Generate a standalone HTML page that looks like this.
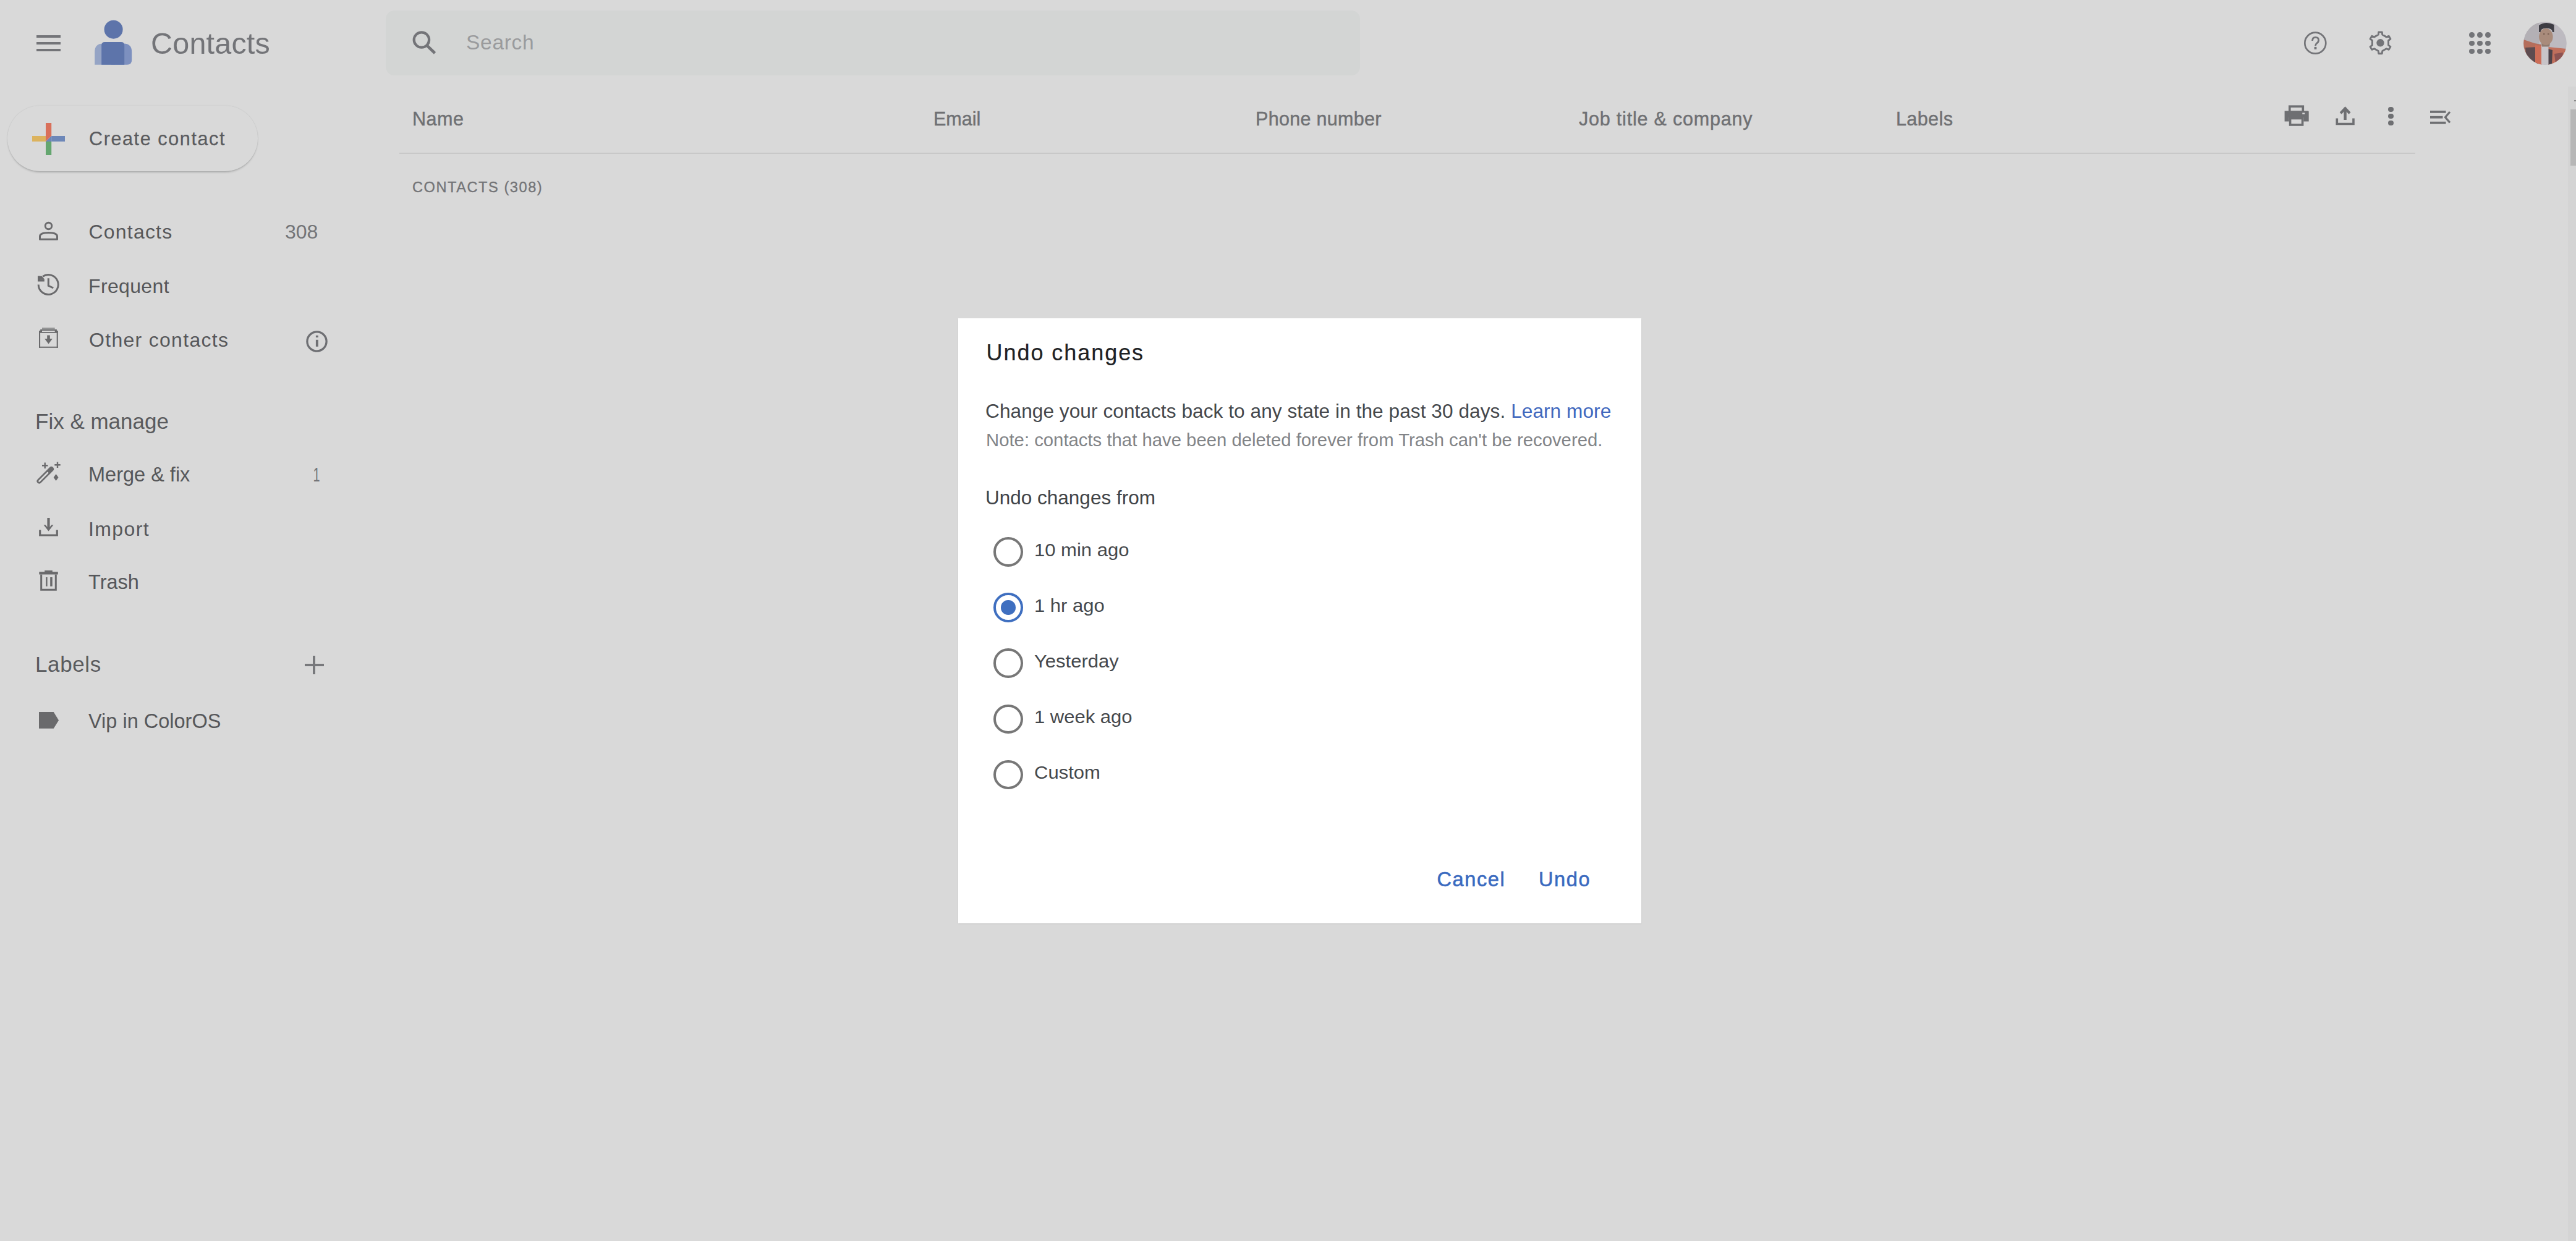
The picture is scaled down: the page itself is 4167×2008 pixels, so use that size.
<!DOCTYPE html>
<html><head><meta charset="utf-8"><title>Contacts</title>
<style>
html,body{margin:0;padding:0;}
body{width:4167px;height:2008px;overflow:hidden;background:#d9d9d9;position:relative;font-family:"Liberation Sans", sans-serif;}
.r{position:absolute;}
.t{position:absolute;white-space:nowrap;}
svg.r{overflow:visible;}
</style></head><body>
<div class="r" style="left:59px;top:57px;width:39px;height:4px;background:#737478"></div>
<div class="r" style="left:59px;top:68px;width:39px;height:4px;background:#737478"></div>
<div class="r" style="left:59px;top:79px;width:39px;height:4px;background:#737478"></div>
<svg class="r" style="left:150px;top:30px" width="66" height="78" viewBox="0 0 66 78">
<circle cx="33.6" cy="17.7" r="15" fill="#5d74aa"/>
<path d="M3.2 74.8 L3.2 54 Q3.2 40.5 16.5 40.5 L36 40.5 L36 74.8Z" fill="#95a4c5"/>
<path d="M30 74.8 L30 40.5 L50 40.5 Q63.2 40.5 63.2 54 L63.2 67 Q63.2 74.8 55.5 74.8Z" fill="#7d90bf"/>
<path d="M14.2 74.8 L14.2 43.5 Q14.2 38.1 19.6 38.1 L45.8 38.1 Q51.2 38.1 51.2 43.5 L51.2 74.8Z" fill="#5d74aa"/>
</svg>
<div class="t" style="left:244.0px;top:45.5px;font-size:48.5px;line-height:48.5px;color:#737478;font-weight:400;letter-spacing:0.2px;">Contacts</div>
<div class="r" style="left:624px;top:17px;width:1576px;height:105px;border-radius:14px;background:#d3d5d4"></div>
<svg class="r" style="left:660px;top:44px" width="52" height="50" viewBox="0 0 52 50">
<circle cx="21.9" cy="20.5" r="12.2" fill="none" stroke="#737478" stroke-width="4.2"/>
<path d="M30.5 29.5 L43.5 42" stroke="#737478" stroke-width="4.6"/>
</svg>
<div class="t" style="left:754.0px;top:52.0px;font-size:33.5px;line-height:33.5px;color:#9a9b9d;font-weight:400;letter-spacing:0.7px;">Search</div>
<svg class="r" style="left:3720px;top:44px" width="52" height="52" viewBox="0 0 52 52">
<circle cx="25.3" cy="25.7" r="17" fill="none" stroke="#737478" stroke-width="2.7"/>
<path d="M20.6 22 Q20.6 16.3 25.6 16.3 Q30.6 16.3 30.6 21 Q30.6 24 27.6 26.2 Q25.5 27.6 25.5 30.5" fill="none" stroke="#737478" stroke-width="2.8"/>
<rect x="23.6" y="32" width="3.8" height="3.8" fill="#737478"/>
</svg>
<svg class="r" style="left:3824px;top:43px" width="54" height="54" viewBox="0 0 54 54">
<path d="M23.74 8.92 L29.26 8.92 L29.75 13.09 L36.31 16.88 L40.17 15.22 L42.93 20.00 L39.56 22.51 L39.56 30.09 L42.93 32.60 L40.17 37.38 L36.31 35.72 L29.75 39.51 L29.26 43.68 L23.74 43.68 L23.25 39.51 L16.69 35.72 L12.83 37.38 L10.07 32.60 L13.44 30.09 L13.44 22.51 L10.07 20.00 L12.83 15.22 L16.69 16.88 L23.25 13.09Z" fill="none" stroke="#737478" stroke-width="2.9" stroke-linejoin="round"/>
<circle cx="26.5" cy="26.3" r="6.2" fill="#737478"/>
</svg>
<div class="r" style="left:3994.2px;top:52.0px;width:8.6px;height:8.6px;border-radius:50%;background:#737478"></div>
<div class="r" style="left:4007.1px;top:52.0px;width:8.6px;height:8.6px;border-radius:50%;background:#737478"></div>
<div class="r" style="left:4020.1px;top:52.0px;width:8.6px;height:8.6px;border-radius:50%;background:#737478"></div>
<div class="r" style="left:3994.2px;top:65.7px;width:8.6px;height:8.6px;border-radius:50%;background:#737478"></div>
<div class="r" style="left:4007.1px;top:65.7px;width:8.6px;height:8.6px;border-radius:50%;background:#737478"></div>
<div class="r" style="left:4020.1px;top:65.7px;width:8.6px;height:8.6px;border-radius:50%;background:#737478"></div>
<div class="r" style="left:3994.2px;top:78.5px;width:8.6px;height:8.6px;border-radius:50%;background:#737478"></div>
<div class="r" style="left:4007.1px;top:78.5px;width:8.6px;height:8.6px;border-radius:50%;background:#737478"></div>
<div class="r" style="left:4020.1px;top:78.5px;width:8.6px;height:8.6px;border-radius:50%;background:#737478"></div>
<svg class="r" style="left:4081.5px;top:35px" width="70" height="70" viewBox="0 0 70 70">
<defs><clipPath id="av"><circle cx="35" cy="35" r="34.8"/></clipPath></defs>
<g clip-path="url(#av)">
<rect width="70" height="70" fill="#bdbac0"/>
<rect x="0" y="0" width="25" height="70" fill="#b3b0b5"/>
<path d="M0 29 L18 35 L29 37 L29 70 L0 70Z" fill="#b46e5c"/>
<path d="M3 42 L23 41 L25 70 L6 70Z" fill="#5e4c50"/>
<path d="M19 38 L29.5 39 L29.5 70 L19 70Z" fill="#cd6d57"/>
<path d="M40 41 L70 44 L70 70 L40 70Z" fill="#c06f5c"/>
<path d="M50 52 L64 50 L62 68 L52 68Z" fill="#8c5352"/>
<path d="M40 44 L47 46 L46 70 L40 70Z" fill="#4d434a"/>
<rect x="29" y="39" width="11.5" height="31" fill="#c8c4c8"/>
<path d="M29 34 L43 34 L42 40.5 L30 40.5Z" fill="#8f7b70"/>
<ellipse cx="36.3" cy="24.5" rx="11.3" ry="13.5" fill="#a98b7b"/>
<path d="M25 17 L25 6 Q36 -1.5 49.5 5 L49.5 17 L47 17 Q47 10.5 37 10.5 Q27.5 10.5 27.5 17Z" fill="#3d3c43"/>
<path d="M32 20 L34.5 20 M39 20 L41.5 20" stroke="#7d6255" stroke-width="2"/>
</g></svg>
<div class="r" style="left:12px;top:171px;width:405px;height:106px;border-radius:53px;background:#d9d9d9;box-shadow:0 3px 3px -1px rgba(60,64,67,0.26),0 0 1.5px rgba(60,64,67,0.2)"></div>
<svg class="r" style="left:52px;top:199px" width="53" height="52" viewBox="0 0 53 52">
<rect x="22" y="0" width="9.2" height="21" fill="#d9705a"/>
<rect x="0" y="21" width="22" height="9" fill="#dcb35e"/>
<rect x="31.2" y="21" width="21.8" height="9" fill="#6d87b8"/>
<rect x="22" y="30" width="9.2" height="22" fill="#64a66f"/>
<path d="M22 21 L31.2 21 L22 30Z" fill="#d9705a"/>
<path d="M31.2 21 L31.2 30 L22 30Z" fill="#6d87b8"/>
</svg>
<div class="t" style="left:144.0px;top:209.1px;font-size:30.5px;line-height:30.5px;color:#5a5b5e;font-weight:400;letter-spacing:1.62px;-webkit-text-stroke:0.25px #5a5b5e;">Create contact</div>
<svg class="r" style="left:56px;top:350px" width="46" height="46" viewBox="0 0 46 46">
<circle cx="22.5" cy="15.5" r="5.3" fill="none" stroke="#6a6a6c" stroke-width="2.9"/>
<path d="M8.5 37.3 L8.5 32.5 Q8.5 26.5 22.5 26.5 Q36.5 26.5 36.5 32.5 L36.5 37.3 Z" fill="none" stroke="#6a6a6c" stroke-width="3" stroke-linejoin="round"/>
</svg>
<div class="t" style="left:143.5px;top:359.0px;font-size:32px;line-height:32px;color:#56575a;font-weight:400;letter-spacing:1.2px;">Contacts</div>
<div class="t" style="left:461.0px;top:359.0px;font-size:32px;line-height:32px;color:#737477;font-weight:400;letter-spacing:0px;">308</div>
<svg class="r" style="left:56px;top:438px" width="46" height="46" viewBox="0 0 46 46">
<path d="M6.20 22.50 A16 16 0 1 0 13.02 9.39" fill="none" stroke="#6a6a6c" stroke-width="3"/>
<path d="M5 8.7 L5 17.6 L15.8 17.6 L15.8 13.6 L9 13.6 L9 8.7Z" fill="#6a6a6c"/>
<path d="M5 8.7 L11.5 8.7 L15.8 13.6 L9 13.6Z" fill="#6a6a6c"/>
<path d="M22.3 12.3 L22.3 24.3 L30.3 28" fill="none" stroke="#6a6a6c" stroke-width="3"/>
</svg>
<div class="t" style="left:143.0px;top:447.0px;font-size:32px;line-height:32px;color:#56575a;font-weight:400;letter-spacing:0.35px;">Frequent</div>
<svg class="r" style="left:56px;top:525px" width="46" height="46" viewBox="0 0 46 46">
<rect x="12" y="5.2" width="20.7" height="2.3" fill="#929394"/>
<rect x="9.2" y="8" width="26.7" height="2" fill="#6a6a6c"/>
<rect x="7" y="10" width="5" height="2" fill="#6a6a6c"/>
<rect x="32.7" y="10" width="5.1" height="2" fill="#6a6a6c"/>
<rect x="7" y="12" width="30.8" height="1.8" fill="#6a6a6c"/>
<rect x="7" y="10" width="2.1" height="27.8" fill="#6a6a6c"/>
<rect x="35.7" y="10" width="2.1" height="27.8" fill="#6a6a6c"/>
<rect x="7" y="35.8" width="30.8" height="2" fill="#6a6a6c"/>
<rect x="20.2" y="17.5" width="4.6" height="7.5" fill="#6a6a6c"/>
<path d="M16.1 23 L28.9 23 L22.5 31.6Z" fill="#6a6a6c"/>
</svg>
<div class="t" style="left:144.0px;top:533.7px;font-size:32px;line-height:32px;color:#56575a;font-weight:400;letter-spacing:1.3px;">Other contacts</div>
<svg class="r" style="left:490px;top:530px" width="46" height="46" viewBox="0 0 46 46">
<circle cx="22.5" cy="22.5" r="15.6" fill="none" stroke="#6e6f73" stroke-width="3.3"/>
<rect x="20.9" y="12.8" width="3.9" height="3.2" fill="#6e6f73"/>
<rect x="20.9" y="19.8" width="3.9" height="11" fill="#6e6f73"/>
</svg>
<div class="t" style="left:57.0px;top:663.8px;font-size:35px;line-height:35px;color:#5a5b5e;font-weight:400;letter-spacing:0px;">Fix &amp; manage</div>
<svg class="r" style="left:56px;top:744px" width="46" height="46" viewBox="0 0 46 46">
<path d="M7.5 34.5 L27 15" stroke="#6a6a6c" stroke-width="8" stroke-linecap="round"/>
<path d="M7.5 34.5 L21 21" stroke="#d9d9d9" stroke-width="2.6" stroke-linecap="round"/>
<path d="M16.7 4.5 L16.7 14 M12 9.3 L21.4 9.3 M37 3.5 L37 13 M32.3 8.2 L41.7 8.2" stroke="#6a6a6c" stroke-width="2.4"/>
<path d="M34.6 23 L38.5 28.5 L34.6 34 L30.7 28.5Z" fill="#6a6a6c"/>
</svg>
<div class="t" style="left:143.0px;top:751.7px;font-size:32.5px;line-height:32.5px;color:#56575a;font-weight:400;letter-spacing:0px;">Merge &amp; fix</div>
<div class="t" style="left:503.0px;top:752.1px;font-size:32px;line-height:32px;color:#737477;font-weight:400;letter-spacing:0px;transform:scaleX(0.62);transform-origin:50% 50%;">1</div>
<svg class="r" style="left:56px;top:831px" width="46" height="46" viewBox="0 0 46 46">
<path d="M22.5 7 L22.5 24" stroke="#6a6a6c" stroke-width="4.2"/>
<path d="M14.5 18.2 L22.5 28.5 L30.5 18.2 L27.5 18.2 L22.5 24 L17.5 18.2Z" fill="#6a6a6c"/>
<path d="M8.7 26.5 L8.7 35 L36.3 35 L36.3 26.5" fill="none" stroke="#6a6a6c" stroke-width="3.2"/>
</svg>
<div class="t" style="left:143.0px;top:839.8px;font-size:32px;line-height:32px;color:#56575a;font-weight:400;letter-spacing:1.4px;">Import</div>
<svg class="r" style="left:56px;top:918px" width="46" height="46" viewBox="0 0 46 46">
<rect x="7.3" y="7.2" width="30.5" height="4.3" fill="#6a6a6c"/>
<rect x="16.2" y="5" width="12.6" height="3" fill="#6a6a6c"/>
<path d="M10.7 11.5 L10.7 36.2 L34.3 36.2 L34.3 11.5" fill="none" stroke="#6a6a6c" stroke-width="3"/>
<rect x="18.2" y="16" width="2.4" height="14.7" fill="#6a6a6c"/>
<rect x="25.2" y="16" width="3.5" height="14.7" fill="#6a6a6c"/>
</svg>
<div class="t" style="left:143.0px;top:926.3px;font-size:32.5px;line-height:32.5px;color:#56575a;font-weight:400;letter-spacing:0px;">Trash</div>
<div class="t" style="left:57.0px;top:1057.0px;font-size:35px;line-height:35px;color:#5a5b5e;font-weight:400;letter-spacing:0.6px;">Labels</div>
<div class="r" style="left:493px;top:1073.7px;width:31px;height:4px;background:#78797c"></div>
<div class="r" style="left:506.4px;top:1061.3px;width:4px;height:29.4px;background:#78797c"></div>
<svg class="r" style="left:56px;top:1142px" width="46" height="46" viewBox="0 0 46 46">
<path d="M7 9.9 L30.7 9.9 L39 23.5 L30.7 36.8 L7 36.8Z" fill="#6a6a6c"/>
</svg>
<div class="t" style="left:143.0px;top:1151.1px;font-size:32.5px;line-height:32.5px;color:#56575a;font-weight:400;letter-spacing:0px;">Vip in ColorOS</div>
<div class="t" style="left:667.0px;top:176.9px;font-size:30.5px;line-height:30.5px;color:#6f7073;font-weight:400;letter-spacing:0.5px;-webkit-text-stroke:0.45px #6f7073;">Name</div>
<div class="t" style="left:1510.0px;top:176.7px;font-size:30.5px;line-height:30.5px;color:#6f7073;font-weight:400;letter-spacing:0px;-webkit-text-stroke:0.45px #6f7073;">Email</div>
<div class="t" style="left:2031.0px;top:176.7px;font-size:30.5px;line-height:30.5px;color:#6f7073;font-weight:400;letter-spacing:0.3px;-webkit-text-stroke:0.45px #6f7073;">Phone number</div>
<div class="t" style="left:2554.0px;top:176.7px;font-size:30.5px;line-height:30.5px;color:#6f7073;font-weight:400;letter-spacing:0.8px;-webkit-text-stroke:0.45px #6f7073;">Job title &amp; company</div>
<div class="t" style="left:3067.0px;top:176.7px;font-size:30.5px;line-height:30.5px;color:#6f7073;font-weight:400;letter-spacing:0.4px;-webkit-text-stroke:0.45px #6f7073;">Labels</div>
<div class="r" style="left:646px;top:247px;width:3261px;height:2px;background:#c8c8c8"></div>
<div class="t" style="left:667.0px;top:291.7px;font-size:23.5px;line-height:23.5px;color:#737477;font-weight:400;letter-spacing:1.6px;-webkit-text-stroke:0.35px #737477;">CONTACTS (308)</div>
<svg class="r" style="left:3690px;top:165px" width="50" height="45" viewBox="0 0 50 45">
<rect x="13.8" y="7.2" width="21.5" height="9" fill="none" stroke="#6e6f72" stroke-width="3.6"/>
<path d="M5.6 14.5 L43.5 14.5 Q44.7 14.5 44.7 15.7 L44.7 31.5 L36.3 31.5 L36.3 25 L12.8 25 L12.8 31.5 L5.6 31.5Z" fill="#6e6f72"/>
<rect x="14.6" y="26.5" width="20" height="10.5" fill="none" stroke="#6e6f72" stroke-width="3.6"/>
<rect x="34.3" y="17.5" width="4" height="2.4" fill="#d9d9d9"/>
</svg>
<svg class="r" style="left:3770px;top:165px" width="46" height="45" viewBox="0 0 46 45">
<path d="M23.6 9.5 L23.6 29" stroke="#6e6f72" stroke-width="4.4"/>
<path d="M16.2 18.3 L23.6 10.3 L31 18.3" fill="none" stroke="#6e6f72" stroke-width="4.2"/>
<path d="M10.3 26.5 L10.3 35.5 L37 35.5 L37 26.5" fill="none" stroke="#6e6f72" stroke-width="3.6"/>
</svg>
<div class="r" style="left:3863.3px;top:172.6px;width:8.4px;height:8.4px;border-radius:50%;background:#6e6f72"></div>
<div class="r" style="left:3863.3px;top:183.7px;width:8.4px;height:8.4px;border-radius:50%;background:#6e6f72"></div>
<div class="r" style="left:3863.3px;top:194.5px;width:8.4px;height:8.4px;border-radius:50%;background:#6e6f72"></div>
<svg class="r" style="left:3925px;top:170px" width="46" height="40" viewBox="0 0 46 40">
<rect x="6" y="9" width="25.5" height="3.8" fill="#6e6f72"/>
<rect x="6" y="17.8" width="20.5" height="3.8" fill="#6e6f72"/>
<rect x="6" y="26.8" width="25.5" height="3.8" fill="#6e6f72"/>
<path d="M38 11 L30.5 19.7 L38 28.4" fill="none" stroke="#6e6f72" stroke-width="3.2"/>
</svg>
<div class="r" style="left:4154px;top:140px;width:13px;height:1868px;background:#d4d4d4"></div>
<div class="r" style="left:4158px;top:177px;width:9px;height:91px;background:#b7b7b7"></div>
<div class="r" style="left:4163.5px;top:161.8px;width:3.5px;height:2px;background:#8a8a8a"></div>
<div class="r" style="left:1550px;top:515px;width:1105px;height:979px;background:#ffffff;box-shadow:0 1px 2px rgba(0,0,0,0.07)"></div>
<div class="t" style="left:1595.5px;top:552.8px;font-size:36px;line-height:36px;color:#202124;font-weight:400;letter-spacing:1.95px;-webkit-text-stroke:0.2px #202124;">Undo changes</div>
<div class="t" style="left:1594.0px;top:649.8px;font-size:31.6px;line-height:31.6px;color:#45484c;font-weight:400;letter-spacing:0.06px;">Change your contacts back to any state in the past 30 days. <span style="color:#4068be">Learn more</span></div>
<div class="t" style="left:1595.0px;top:696.8px;font-size:29.3px;line-height:29.3px;color:#828487;font-weight:400;letter-spacing:0px;">Note: contacts that have been deleted forever from Trash can't be recovered.</div>
<div class="t" style="left:1594.0px;top:790.0px;font-size:31.5px;line-height:31.5px;color:#404347;font-weight:400;letter-spacing:0px;">Undo changes from</div>
<div class="r" style="left:1607.3px;top:869.3px;width:47.4px;height:47.4px;box-sizing:border-box;border-radius:50%;border:4.4px solid #777777"></div>
<div class="t" style="left:1673.0px;top:873.6px;font-size:31px;line-height:31px;color:#45484c;font-weight:400;letter-spacing:0px;transform:scaleY(0.95);transform-origin:0 84.6%;">10 min ago</div>
<div class="r" style="left:1607.3px;top:959.3px;width:47.4px;height:47.4px;box-sizing:border-box;border-radius:50%;border:4.4px solid #3f6fc0"></div>
<div class="r" style="left:1619.3px;top:971.3px;width:23.4px;height:23.4px;border-radius:50%;background:#3f6fc0"></div>
<div class="t" style="left:1673.0px;top:963.6px;font-size:31px;line-height:31px;color:#45484c;font-weight:400;letter-spacing:0px;transform:scaleY(0.95);transform-origin:0 84.6%;">1 hr ago</div>
<div class="r" style="left:1607.3px;top:1049.3px;width:47.4px;height:47.4px;box-sizing:border-box;border-radius:50%;border:4.4px solid #777777"></div>
<div class="t" style="left:1673.0px;top:1053.6px;font-size:31px;line-height:31px;color:#45484c;font-weight:400;letter-spacing:0px;transform:scaleY(0.95);transform-origin:0 84.6%;">Yesterday</div>
<div class="r" style="left:1607.3px;top:1139.6px;width:47.4px;height:47.4px;box-sizing:border-box;border-radius:50%;border:4.4px solid #777777"></div>
<div class="t" style="left:1673.0px;top:1143.9px;font-size:31px;line-height:31px;color:#45484c;font-weight:400;letter-spacing:0px;transform:scaleY(0.95);transform-origin:0 84.6%;">1 week ago</div>
<div class="r" style="left:1607.3px;top:1229.9px;width:47.4px;height:47.4px;box-sizing:border-box;border-radius:50%;border:4.4px solid #777777"></div>
<div class="t" style="left:1673.0px;top:1234.2px;font-size:31px;line-height:31px;color:#45484c;font-weight:400;letter-spacing:0px;transform:scaleY(0.95);transform-origin:0 84.6%;">Custom</div>
<div class="t" style="left:2324.5px;top:1407.1px;font-size:32.5px;line-height:32.5px;color:#3a6abf;font-weight:400;letter-spacing:1.6px;-webkit-text-stroke:0.6px #3a6abf;">Cancel</div>
<div class="t" style="left:2489.0px;top:1407.1px;font-size:32.5px;line-height:32.5px;color:#3a6abf;font-weight:400;letter-spacing:1.6px;-webkit-text-stroke:0.6px #3a6abf;">Undo</div>

</body></html>
